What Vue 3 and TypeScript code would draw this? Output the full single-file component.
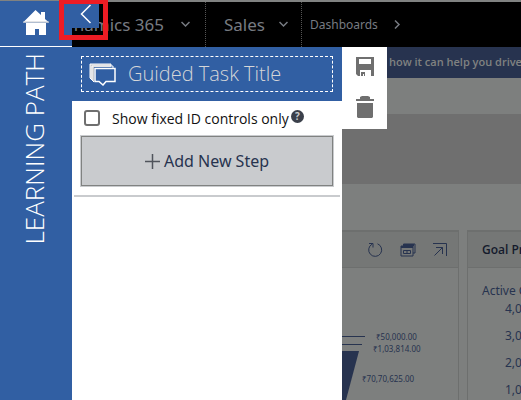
<script setup lang="ts">
import { ref } from 'vue'

const title = ref('Guided Task Title')
const fixedOnly = ref(false)
const axis = ['4,000', '3,000', '2,000', '1,000']
</script>

<template>
  <div class="app">
    <aside class="rail">
      <a class="home" href="#" aria-label="Home">
        <svg width="28" height="27" viewBox="0 0 28 27">
          <path d="M1 13.5 13.5 1 19 6V3h4v7l4 3.500z" fill="#fff" />
          <path d="M4 14h20v12h-7v-6h-4v6H4z" fill="#fff" />
          <path d="M1 12.500h26v1H1z" fill="#c9cbce" />
        </svg>
      </a>
      <span class="rail-title">LEARNING PATH</span>
    </aside>

    <div class="main">
      <header class="topbar">
        <a class="brand" href="#"><span>Dynamics 365</span>
          <svg width="9" height="7" viewBox="0 0 9 7"><path d="M.5 1l4 4 4-4" /></svg>
        </a>
        <a class="area" href="#">Sales
          <svg width="9" height="7" viewBox="0 0 9 7"><path d="M.5 1l4 4 4-4" /></svg>
        </a>
        <a class="crumb" href="#">Dashboards
          <svg width="7" height="9" viewBox="0 0 7 9"><path d="M1 .5l4 4-4 4" /></svg>
        </a>
      </header>

      <div class="body">
        <section class="panel">
          <div class="panel-head">
            <label class="title-box">
              <svg width="27" height="23" viewBox="0 0 27 23" fill="none" stroke="#fff">
                <path d="M1 1h21v3H5v15L1 15z" fill="#c9cbce" stroke="none" />
                <path d="M1 15V1h21v2M3 17V3h21v2M1 15l4 4" />
                <path d="M6 5.500h20v13H17l-3 3.500-4-3.500H6z" fill="#315fa3" stroke-width="1.500" />
              </svg>
              <input v-model="title" type="text" aria-label="Task title" />
            </label>
          </div>
          <div class="options">
            <input id="fixed" v-model="fixedOnly" type="checkbox" />
            <label for="fixed">Show fixed ID controls only</label>
            <button class="help" type="button">?</button>
          </div>
          <button class="add" type="button">
            <svg width="15" height="15" viewBox="0 0 15 15"><path d="M0 7.500h15M7.500 0v15" stroke="#50545c" stroke-width="1.500" /></svg>
            Add New Step
          </button>
          <hr class="rule" />
        </section>

        <main class="content">
          <p class="banner">how it can help you drive</p>
          <div class="band"></div>
          <div class="cards">
            <article class="card chart">
              <div class="card-head tools">
                <button type="button" aria-label="Refresh">
                  <svg width="16" height="16" viewBox="0 0 16 16"><path d="M10.500 1.800A6.500 6.500 0 1 1 5 2.200M2 1.500h4v4" /></svg>
                </button>
                <button type="button" aria-label="View records">
                  <svg width="16" height="14" viewBox="0 0 16 14">
                    <path d="M3.500 3V1H15v9h-2" /><path d="M1 3h12v10H1z" /><path d="M1 4h12M3 2h11" stroke-width="2" /><path d="M3.500 7.500h7v3h-7zM7 7v4" />
                  </svg>
                </button>
                <button type="button" aria-label="Expand">
                  <svg width="14" height="14" viewBox="0 0 14 14"><path d="M0 .5h13.500V13M3 4.500h6.500V11M9.500 4.500l-8 8" /></svg>
                </button>
              </div>
              <svg class="funnel" width="116" height="132" viewBox="0 0 116 132">
                <path d="M0 68.500h23M0 76.500h20" stroke="#27334f" />
                <path d="M0 83h17L4 132H0z" fill="#27334f" />
                <text x="34" y="72">₹50,000.00</text>
                <text x="31" y="84">₹1,03,814.00</text>
                <text x="20" y="114">₹70,70,625.00</text>
              </svg>
            </article>
            <article class="card">
              <h2 class="card-head">Goal Progress</h2>
              <p class="series">Active Goals</p>
              <ul class="axis">
                <li v-for="v in axis" :key="v">{{ v }}</li>
              </ul>
            </article>
          </div>
          <div class="actions">
            <button type="button" aria-label="Save">
              <svg width="18" height="19" viewBox="0 0 18 19" fill="#6f6f6f">
                <path fill-rule="evenodd" d="M0 0h18v19h-3v-6H4v6H2l-2-2zM3 2v5h12V2z" />
                <path d="M5 15h4v4H8v-2H7v2H5z" />
              </svg>
            </button>
            <button type="button" aria-label="Delete">
              <svg width="18" height="22" viewBox="0 0 18 22" fill="#6f6f6f">
                <path d="M0 3h4V1l2-1h6l2 1v2h4v2H0zM1 7h16v14l-1 1H2l-1-1z" />
              </svg>
            </button>
          </div>
        </main>
      </div>
    </div>

    <button class="collapse" type="button" aria-label="Collapse panel">
      <svg width="12" height="20" viewBox="0 0 12 20"><path d="M10.500 1 1.500 10l9 9" fill="none" stroke="#fff" stroke-width="1.500" /></svg>
    </button>
    <div class="marker"></div>
  </div>
</template>

<style>
body {
  margin: 0;
  overflow: hidden;
}
</style>

<style scoped>
* {
  box-sizing: border-box;
}
.app {
  position: relative;
  display: flex;
  height: 100vh;
  overflow: hidden;
  font-family: "Noto Sans", "Open Sans", sans-serif;
  color: #27334f;
}
button {
  padding: 0;
  border: 0;
  background: none;
  font: inherit;
  color: inherit;
}
a {
  color: inherit;
  text-decoration: none;
}
svg {
  display: block;
  flex: none;
}
p, h2, ul {
  margin: 0;
  padding: 0;
}
.rail {
  flex: 0 0 72px;
  background: #315fa3;
  border-top: 1px solid #808281;
}
.home {
  display: flex;
  height: 46px;
  padding: 8px 0 0 22px;
  border-bottom: 1px solid #fff;
}
.rail-title {
  display: block;
  margin: 6px 0 0 16px;
  writing-mode: vertical-rl;
  transform: rotate(180deg);
  font: 300 26px/36px "Open Sans", sans-serif;
  color: #fff;
}
.main {
  flex: 1;
  min-width: 0;
  display: flex;
  flex-direction: column;
}
.topbar {
  flex: 0 0 47px;
  display: flex;
  background: #000;
  border-top: 2px solid #808281;
  color: #777b82;
  white-space: nowrap;
}
.topbar a {
  display: flex;
  align-items: center;
}
.topbar path {
  fill: none;
  stroke: currentColor;
  stroke-width: 1.500;
}
.topbar .brand {
  flex: 0 0 134px;
  gap: 17px;
  padding-right: 15px;
  justify-content: flex-end;
  overflow: hidden;
  font-size: 17px;
  border-right: 1px dotted #555;
}
.topbar .area {
  flex: 0 0 96px;
  gap: 14px;
  padding-left: 18px;
  font-size: 17px;
  border-right: 1px dotted #555;
}
.topbar .crumb {
  gap: 16px;
  padding-left: 8px;
  font-size: 12px;
}
.body {
  flex: 1;
  min-height: 0;
  display: flex;
}
.panel {
  flex: 0 0 270px;
  min-width: 0;
  background: #fff;
}
.panel-head {
  padding: 9px;
  height: 54px;
  background: #315fa3;
}
.title-box {
  display: flex;
  align-items: center;
  gap: 12px;
  height: 36px;
  padding: 0 7px;
  border: 1px dashed #fff;
}
.title-box input {
  flex: 1;
  min-width: 0;
  padding: 0;
  border: 0;
  background: none;
  outline: 0;
  font: 300 20px/28px "Open Sans", sans-serif;
  color: #d5d6d8;
}
.options {
  display: flex;
  align-items: center;
  height: 34px;
  padding-left: 12px;
  font: 14px "Open Sans", sans-serif;
  color: #111;
  white-space: nowrap;
}
.options input {
  appearance: none;
  width: 16px;
  height: 16px;
  margin: 0 12px 0 0;
  border: 2px solid #6f6f6f;
  border-radius: 3px;
  background: #fff;
}
.help {
  width: 13px;
  height: 13px;
  margin: 0 0 4px 2px;
  border-radius: 50%;
  background: #3b404b;
  color: #c9cbce;
  font-size: 10px;
  font-weight: 700;
  line-height: 13px;
}
.add {
  display: flex;
  align-items: center;
  justify-content: center;
  gap: 4px;
  width: calc(100% - 18px);
  height: 50px;
  margin: 1px 9px 0;
  border: 1px solid #808281;
  outline: 1px solid #c9cbce;
  background: #c9cbce;
  font-size: 16px;
}
.rule {
  margin: 9px 2px 0;
  border: 0;
  border-top: 2px solid #c9cbce;
}
.content {
  position: relative;
  flex: 1;
  min-width: 0;
  display: flex;
  flex-direction: column;
  overflow: hidden;
  background: #7d7f7e;
}
.banner {
  height: 31px;
  padding-left: 47px;
  background: #27334f;
  color: #808281;
  font: 600 11px/30px "Open Sans", sans-serif;
  white-space: nowrap;
}
.band {
  height: 71px;
  margin-top: 36px;
  background: #6f6f6f;
}
.cards {
  flex: 1;
  display: grid;
  grid-template-columns: 117px minmax(0, 1fr);
  gap: 8px;
  margin-top: 46px;
}
.card {
  border: 1px solid #6d6f6e;
  border-width: 2px 0 0 1px;
  overflow: hidden;
  background: #7d7f7e;
  white-space: nowrap;
}
.chart {
  border-width: 2px 1px 0 0;
}
.card-head {
  height: 36px;
  border-bottom: 1px solid #6d6f6e;
  background: #757776;
}
.tools {
  display: flex;
  align-items: center;
  justify-content: flex-end;
  gap: 17px;
  padding-right: 11px;
}
.tools path {
  fill: none;
  stroke: #27334f;
}
.funnel text {
  font: 8px "Noto Sans", sans-serif;
  fill: #27334f;
}
h2.card-head {
  padding-left: 14px;
  font: 600 12px/36px "Open Sans", sans-serif;
  color: #141a2c;
}
.series {
  padding: 14px 0 0 14px;
  font-size: 12px;
  line-height: 18px;
}
.axis {
  display: grid;
  gap: 9px;
  padding-left: 37px;
  list-style: none;
  font-size: 12px;
  line-height: 18px;
}
.actions {
  position: absolute;
  top: 0;
  left: 0;
  display: flex;
  flex-direction: column;
  align-items: center;
  gap: 20px;
  width: 45px;
  height: 82px;
  padding-top: 10px;
  background: #fff;
}
.collapse {
  position: absolute;
  top: 3px;
  left: 64px;
  display: flex;
  width: 35px;
  height: 25px;
  padding: 1px 0 0 16px;
  background: #315fa3;
}
.marker {
  position: absolute;
  top: -1px;
  left: 59px;
  width: 49px;
  height: 41px;
  border: 5px solid #ed1c24;
  pointer-events: none;
}
</style>
